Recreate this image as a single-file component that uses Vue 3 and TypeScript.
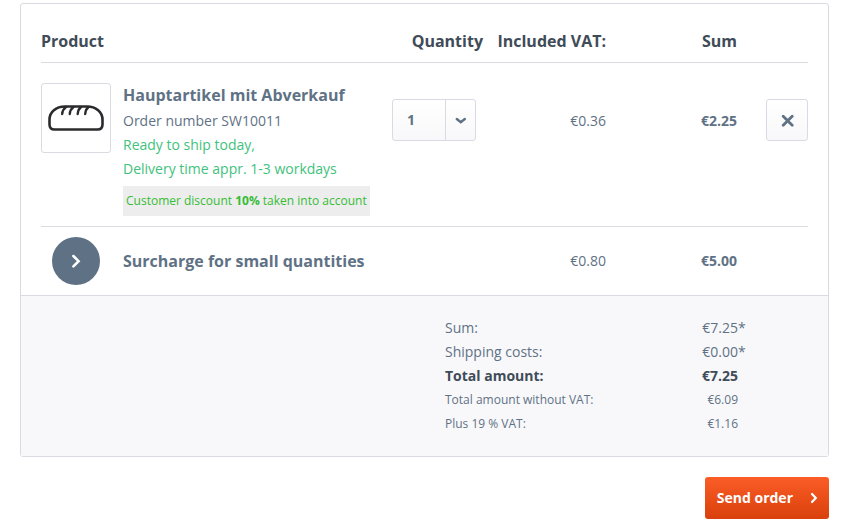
<script setup lang="ts">
import { ref } from 'vue'

interface TotalLine {
  label: string
  amount: string
  mark?: string
  kind: 'normal' | 'total' | 'small'
}

const quantity = ref<number>(1)
const quantities: number[] = [1, 2, 3, 4, 5]

const totals: TotalLine[] = [
  { label: 'Sum:', amount: '€7.25', mark: '*', kind: 'normal' },
  { label: 'Shipping costs:', amount: '€0.00', mark: '*', kind: 'normal' },
  { label: 'Total amount:', amount: '€7.25', kind: 'total' },
  { label: 'Total amount without VAT:', amount: '€6.09', kind: 'small' },
  { label: 'Plus 19 % VAT:', amount: '€1.16', kind: 'small' },
]
</script>

<template>
  <main class="checkout">
    <section class="panel">
      <div class="basket">
        <table class="items">
          <colgroup>
            <col />
            <col class="col-quantity" />
            <col class="col-vat" />
            <col class="col-sum" />
            <col class="col-action" />
          </colgroup>
          <thead>
            <tr>
              <th scope="col" class="left">Product</th>
              <th scope="col">Quantity</th>
              <th scope="col">Included VAT:</th>
              <th scope="col">Sum</th>
              <td></td>
            </tr>
          </thead>
          <tbody>
            <tr class="article">
              <td>
                <div class="product">
                  <a class="thumb" href="#" aria-label="Hauptartikel mit Abverkauf">
                    <svg viewBox="0 0 56 26" width="56" height="26" fill="none" stroke="#2b2b2d" stroke-linecap="round">
                      <path
                        d="M17 1.5H39C48 1.5 54.5 7 54.5 14.5V19.5Q54.5 24.5 49.5 24.5H6.5Q1.5 24.5 1.5 19.5V14.5C1.5 7 8 1.5 17 1.5Z"
                        stroke-width="2.6"
                      />
                      <path
                        d="M18 2Q14.5 4.5 14.2 9M25.5 2Q22 4.5 21.8 9M33 2Q30 4.5 29.7 9M40.5 2Q37.5 4.5 37.2 9"
                        stroke-width="2.4"
                      />
                    </svg>
                  </a>
                  <div class="details">
                    <a class="name" href="#">Hauptartikel mit Abverkauf</a>
                    <p>Order number SW10011</p>
                    <p class="delivery">Ready to ship today,<br />Delivery time appr. 1-3 workdays</p>
                    <p class="discount">Customer discount <strong>10%</strong> taken into account</p>
                  </div>
                </div>
              </td>
              <td class="control">
                <div class="select">
                  <select v-model="quantity" aria-label="Quantity">
                    <option v-for="n in quantities" :key="n" :value="n">{{ n }}</option>
                  </select>
                  <span class="arrow">
                    <svg viewBox="0 0 11 7" width="11" height="7" fill="none" stroke="currentColor" stroke-width="2.4" stroke-linecap="round">
                      <path d="M1.8 2 5.8 5.2 9.8 2" />
                    </svg>
                  </span>
                </div>
              </td>
              <td class="amount">€0.36</td>
              <td class="amount strong">€2.25</td>
              <td class="control right">
                <button class="remove" type="button" aria-label="Remove article">
                  <svg viewBox="0 0 14 14" width="14" height="14" fill="none" stroke="currentColor" stroke-width="2.8" stroke-linecap="round">
                    <path d="M3.2 3.2 12.2 12.2M12.2 3.2 3.2 12.2" />
                  </svg>
                </button>
              </td>
            </tr>
            <tr class="surcharge">
              <td>
                <div class="product">
                  <span class="badge">
                    <svg viewBox="0 0 10 14" width="10" height="14" fill="none" stroke="currentColor" stroke-width="2.5" stroke-linecap="round">
                      <path d="M2.4 2 7.6 7.2 2.4 12.4" />
                    </svg>
                  </span>
                  <span class="name">Surcharge for small quantities</span>
                </div>
              </td>
              <td></td>
              <td class="right">€0.80</td>
              <td class="right strong">€5.00</td>
              <td></td>
            </tr>
          </tbody>
        </table>
      </div>
      <div class="summary">
        <table class="totals">
          <tbody>
            <tr v-for="line in totals" :key="line.label" :class="line.kind">
              <th scope="row">{{ line.label }}</th>
              <td>{{ line.amount }}<span class="mark">{{ line.mark }}</span></td>
            </tr>
          </tbody>
        </table>
      </div>
    </section>
    <button class="submit" type="button">
      Send order
      <svg viewBox="0 0 8 12" width="8" height="12" fill="none" stroke="currentColor" stroke-width="2.2" stroke-linecap="round">
        <path d="M2 2 5.8 6 2 10" />
      </svg>
    </button>
  </main>
</template>

<style>
body {
  background: #fff;
}
</style>

<style scoped>
.checkout {
  display: flex;
  flex-direction: column;
  padding: 3px 24px 6px 20px;
  color: #5f7285;
  font: 14px/24px 'Open Sans', 'Noto Sans', sans-serif;
}

.panel {
  border: 1px solid #dadae0;
  border-radius: 3px;
}

.basket {
  padding: 0 20px;
}

table {
  border-collapse: separate;
  border-spacing: 0;
}

th,
td {
  padding: 0;
  text-align: left;
}

p {
  margin: 0;
}

a {
  color: inherit;
  text-decoration: none;
}

.items {
  width: 100%;
  table-layout: fixed;
}

.col-quantity {
  width: 91px;
}

.col-vat {
  width: 123px;
}

.col-sum {
  width: 131px;
}

.col-action {
  width: 71px;
}

.items thead th,
.items thead td {
  padding: 25px 0 9px;
  border-bottom: 1px solid #dadae0;
  color: #3f4c58;
  font-size: 16px;
  font-weight: 700;
  text-align: right;
  white-space: nowrap;
}

.items thead .left {
  text-align: left;
}

.article td {
  padding: 20px 0 10px;
  border-bottom: 1px solid #dadae0;
  vertical-align: top;
}

.article .control {
  padding-top: 36px;
}

.article .amount {
  padding-top: 46px;
  text-align: right;
}

.items .right {
  text-align: right;
}

.strong {
  font-weight: 700;
}

.product {
  display: flex;
  gap: 12px;
}

.thumb {
  box-sizing: border-box;
  display: flex;
  flex: none;
  align-items: center;
  justify-content: center;
  width: 70px;
  height: 70px;
  border: 1px solid #dadae0;
  border-radius: 3px;
}

.details {
  flex: none;
}

.name {
  display: block;
  font-size: 16px;
  font-weight: 700;
  white-space: nowrap;
}

.details .name {
  margin-bottom: 2px;
}

.delivery {
  color: #41c27c;
}

.discount {
  width: max-content;
  margin-top: 5px;
  padding: 3px;
  background: #ededed;
  color: #36bc36;
  font-size: 12px;
}

.select {
  position: relative;
  width: 84px;
  height: 42px;
}

.select select {
  box-sizing: border-box;
  width: 100%;
  height: 100%;
  padding: 0 40px 0 14px;
  border: 1px solid #dadae5;
  border-radius: 3px;
  appearance: none;
  background: linear-gradient(#fff, #f8f8fa);
  color: inherit;
  font: inherit;
  font-weight: 700;
}

.arrow {
  position: absolute;
  top: 1px;
  right: 1px;
  bottom: 1px;
  display: flex;
  align-items: center;
  justify-content: center;
  width: 29px;
  border-left: 1px solid #dadae5;
  pointer-events: none;
}

.remove {
  display: inline-flex;
  align-items: center;
  justify-content: center;
  width: 42px;
  height: 42px;
  padding: 0;
  border: 1px solid #dadae5;
  border-radius: 3px;
  background: linear-gradient(#fff, #f8f8fa);
  color: inherit;
  vertical-align: top;
}

.surcharge td {
  padding: 10px 0;
}

.surcharge .product {
  align-items: center;
}

.badge {
  display: flex;
  align-items: center;
  justify-content: center;
  width: 48px;
  height: 48px;
  margin: 0 11px;
  border-radius: 50%;
  background: #5f7285;
  color: #fff;
}

.summary {
  padding: 20px 83px 20px 20px;
  border-top: 1px solid #dadae0;
  background: #f8f8fa;
}

.totals {
  width: 300px;
  margin-left: auto;
}

.totals th {
  font-weight: 400;
}

.totals td {
  text-align: right;
}

.totals .total th,
.totals .total td {
  color: #3f4c58;
  font-weight: 700;
}

.totals .small {
  font-size: 12px;
}

.totals tr {
  height: 24px;
}

.mark {
  display: inline-block;
  width: 7px;
  text-align: left;
}

.submit {
  display: flex;
  align-items: center;
  align-self: flex-end;
  justify-content: space-between;
  gap: 17px;
  height: 42px;
  margin-top: 20px;
  padding: 0 11px 0 12px;
  border: 0;
  border-radius: 3px;
  background: linear-gradient(#fb5d27, #d9400b);
  color: #fff;
  font: inherit;
  font-weight: 700;
}
</style>
